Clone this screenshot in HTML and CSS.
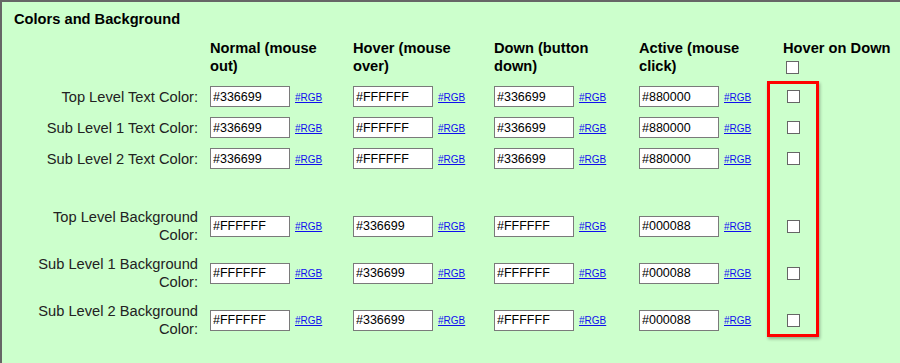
FILE: index.html
```html
<!DOCTYPE html>
<html>
  <head>
    <meta charset="UTF-8" />
    <title>Menu Colors</title>
    <link rel="stylesheet" href="styles.css">
  </head>

  <body>
    <div class="panel">
      <div class="title">Colors and Background</div>

      <div class="grid-row head">
        <div></div>
        <div class="col-head">Normal (mouse out)</div>
        <div class="col-head">Hover (mouse over)</div>
        <div class="col-head">Down (button down)</div>
        <div class="col-head">Active (mouse click)</div>
        <div class="col-head last">
          <span>Hover on Down</span>
          <input type="checkbox" class="check head-check" />
        </div>
      </div>

      <div class="grid-row row">
        <label class="lbl">Top Level Text Color:</label>
        <div class="cell"><input class="color" value="#336699" /><a href="#">#RGB</a></div>
        <div class="cell"><input class="color" value="#FFFFFF" /><a href="#">#RGB</a></div>
        <div class="cell"><input class="color" value="#336699" /><a href="#">#RGB</a></div>
        <div class="cell"><input class="color" value="#880000" /><a href="#">#RGB</a></div>
        <div class="cell"><input type="checkbox" class="check" /></div>
      </div>

      <div class="grid-row row">
        <label class="lbl">Sub Level 1 Text Color:</label>
        <div class="cell"><input class="color" value="#336699" /><a href="#">#RGB</a></div>
        <div class="cell"><input class="color" value="#FFFFFF" /><a href="#">#RGB</a></div>
        <div class="cell"><input class="color" value="#336699" /><a href="#">#RGB</a></div>
        <div class="cell"><input class="color" value="#880000" /><a href="#">#RGB</a></div>
        <div class="cell"><input type="checkbox" class="check" /></div>
      </div>

      <div class="grid-row row">
        <label class="lbl">Sub Level 2 Text Color:</label>
        <div class="cell"><input class="color" value="#336699" /><a href="#">#RGB</a></div>
        <div class="cell"><input class="color" value="#FFFFFF" /><a href="#">#RGB</a></div>
        <div class="cell"><input class="color" value="#336699" /><a href="#">#RGB</a></div>
        <div class="cell"><input class="color" value="#880000" /><a href="#">#RGB</a></div>
        <div class="cell"><input type="checkbox" class="check" /></div>
      </div>

      <div class="grid-row row tall spaced">
        <label class="lbl">Top Level Background Color:</label>
        <div class="cell"><input class="color" value="#FFFFFF" /><a href="#">#RGB</a></div>
        <div class="cell"><input class="color" value="#336699" /><a href="#">#RGB</a></div>
        <div class="cell"><input class="color" value="#FFFFFF" /><a href="#">#RGB</a></div>
        <div class="cell"><input class="color" value="#000088" /><a href="#">#RGB</a></div>
        <div class="cell"><input type="checkbox" class="check" /></div>
      </div>

      <div class="grid-row row tall">
        <label class="lbl">Sub Level 1 Background Color:</label>
        <div class="cell"><input class="color" value="#FFFFFF" /><a href="#">#RGB</a></div>
        <div class="cell"><input class="color" value="#336699" /><a href="#">#RGB</a></div>
        <div class="cell"><input class="color" value="#FFFFFF" /><a href="#">#RGB</a></div>
        <div class="cell"><input class="color" value="#000088" /><a href="#">#RGB</a></div>
        <div class="cell"><input type="checkbox" class="check" /></div>
      </div>

      <div class="grid-row row tall">
        <label class="lbl">Sub Level 2 Background Color:</label>
        <div class="cell"><input class="color" value="#FFFFFF" /><a href="#">#RGB</a></div>
        <div class="cell"><input class="color" value="#336699" /><a href="#">#RGB</a></div>
        <div class="cell"><input class="color" value="#FFFFFF" /><a href="#">#RGB</a></div>
        <div class="cell"><input class="color" value="#000088" /><a href="#">#RGB</a></div>
        <div class="cell"><input type="checkbox" class="check" /></div>
      </div>

      <!-- red highlight drawn over the "Hover on Down" checkboxes -->
      <div class="highlight"></div>
    </div>
  </body>
</html>
```

FILE: styles.css
```css
html, body {
  margin: 0;
  padding: 0;
  background-color: #ccffcc;
  font-family: "Liberation Sans", Arial, sans-serif;
  color: #1a1a1a;
}

.panel {
  position: relative;
  box-sizing: border-box;
  min-height: 100vh;
  padding-top: 8px;
  border-top: 2px solid #666;
  border-left: 2px solid #666;
  background-color: #ccffcc;
}

.title {
  padding-left: 12px;
  font-size: 11pt;
  font-weight: bold;
  line-height: 18px;
  color: #000;
  margin-bottom: 11px;
}

.grid-row {
  display: grid;
  grid-template-columns: 208px 143px 141px 145px 144px 1fr;
  align-items: center;
}

.head {
  align-items: start;
  padding-bottom: 6px;
}

.col-head {
  max-width: 120px;
  font-size: 11pt;
  font-weight: bold;
  line-height: 18px;
  color: #000;
}

.col-head.last {
  max-width: none;
  white-space: nowrap;
}

.row {
  padding: 5px 0;
}

.row.tall {
  padding: 5px 0 6px;
}

.row.spaced {
  margin-top: 29px;
}

.lbl {
  padding: 0 12px 0 28px;
  text-align: right;
  font-size: 11pt;
  line-height: 18px;
  color: #222;
}

.cell {
  display: flex;
  align-items: baseline;
  gap: 5px;
}

input.color {
  box-sizing: border-box;
  width: 80px;
  height: 21px;
  margin: 0;
  padding: 0 2px;
  border: 1px solid #7a7a7a;
  background: #fff;
  font-family: "Liberation Sans", Arial, sans-serif;
  font-size: 12.5px;
  color: #000;
}

a {
  font-size: 10px;
  color: #1010ee;
  text-decoration: underline;
}

.check {
  appearance: none;
  -webkit-appearance: none;
  display: block;
  box-sizing: border-box;
  width: 13px;
  height: 13px;
  margin: 0 0 0 4px;
  border: 1px solid #666;
  background: #fff;
}

.head-check {
  margin: 4px 0 0 3px;
}

.highlight {
  position: absolute;
  left: 765px;
  top: 79px;
  width: 52px;
  height: 256px;
  box-sizing: border-box;
  border: 3px solid #f00;
  box-shadow: 1px 2px 3px rgba(0, 0, 0, 0.3);
}
```
